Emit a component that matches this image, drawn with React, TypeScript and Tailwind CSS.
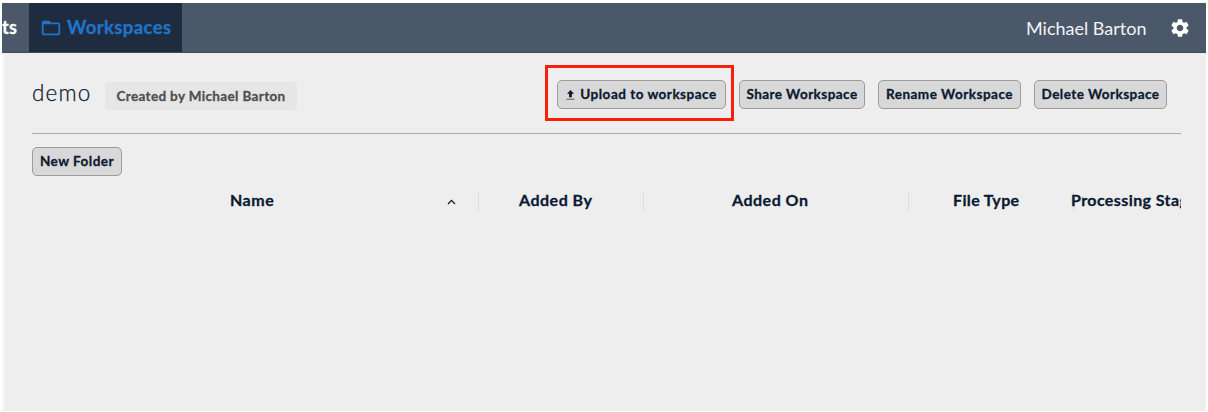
import type { ReactNode } from "react";
import { MdFolderOpen, MdSettings } from "react-icons/md";

function Button({ className, children }: { className: string; children: ReactNode }) {
  return (
    <button
      className={`flex h-[29px] shrink-0 items-center justify-center whitespace-nowrap rounded-[5px] border border-[#999b9d] bg-[#d8d8d8] pb-px text-[13.5px] font-bold [-webkit-text-stroke:0.3px] ${className}`}
    >
      {children}
    </button>
  );
}

function HeaderCell({ className, children }: { className: string; children: ReactNode }) {
  return (
    <div className={`flex h-[19px] shrink-0 items-center whitespace-nowrap pb-[3px] text-[16px] leading-4 font-bold [-webkit-text-stroke:0.3px] ${className}`}>
      {children}
    </div>
  );
}

export default function App() {
  return (
    <div className="h-[412px] w-[1208px] overflow-hidden bg-white pt-[3px] pr-[2px] pb-px pl-[2px] font-['Lato',sans-serif] text-[#0c1a33]">
      <header className="flex h-[50px] items-stretch border-b border-[#3e4d5d] bg-[#4a5869]">
        <div className="flex w-[27px] items-center overflow-hidden text-[18px] font-bold tracking-[0.3px] text-white [-webkit-text-stroke:0.3px]">
          <span>ts</span>
        </div>
        <div className="flex w-[153px] items-center bg-[#1f2c3f] pl-[11px] text-[#1f73ca]">
          <MdFolderOpen className="size-[22px]" />
          <span className="ml-[5px] pt-px text-[18.5px] font-bold tracking-[0.4px] [-webkit-text-stroke:0.3px]">Workspaces</span>
        </div>
        <div className="ml-auto flex items-center text-white">
          <span className="w-[121px] whitespace-nowrap pt-px text-[18px] text-[#f1f3f5]">Michael Barton</span>
          <MdSettings className="mr-[15px] ml-[22px] size-[22px]" />
        </div>
      </header>

      <main className="h-[358px] border-l-2 border-[#f8f8f8] bg-[#eeeeee] pr-[25px] pl-7">
        <div className="flex h-[81px] items-start border-b border-[#aaaaaa] pt-3">
          <h1 className="mt-[11px] w-[73px] text-[22.5px] leading-[34px] font-light tracking-[1.2px] [-webkit-text-stroke:0.25px]">demo</h1>
          <div className="mt-[17px] flex h-7 w-[192px] items-center justify-center whitespace-nowrap rounded bg-[#e6e6e6] text-[13.5px] font-bold tracking-[0.35px] text-[#505050] [-webkit-text-stroke:0.3px]">
            Created by Michael Barton
          </div>
          <div className="ml-auto flex items-start">
            <div className="mr-[5px] h-[56px] w-[189px] border-[3px] border-[#f81f0b] pt-3 pl-[9px]">
              <Button className="w-[169px] tracking-[0.5px]">
                <svg viewBox="0 0 9 10" className="mt-0.5 mr-[5px] h-[10px] w-[9px]" fill="none">
                  <path d="M4.5 0L8 3.7H5.9V7.2H3.1V3.7H1Z" fill="#0c1a33" />
                  <path d="M.5 9.2H8.5" stroke="#4d5964" />
                </svg>
                <span>Upload to workspace</span>
              </Button>
            </div>
            <div className="flex gap-[13px] pt-[15px] pr-[14px]">
              <Button className="w-[126px] tracking-[0.45px]">Share Workspace</Button>
              <Button className="w-[143px] tracking-[0.5px]">Rename Workspace</Button>
              <Button className="w-[133px] tracking-[0.45px]">Delete Workspace</Button>
            </div>
          </div>
        </div>

        <div className="pt-[13px]">
          <Button className="w-[90px] pb-0.5 tracking-[0.5px]">New Folder</Button>
        </div>

        <div className="mt-4 flex overflow-hidden">
          <HeaderCell className="w-[447px] border-r border-[#dddddd] pl-[198px] tracking-[0.5px]">
            <span>Name</span>
            <svg viewBox="0 0 9 6" className="mt-1 mr-[22px] ml-auto h-[6px] w-[9px]" fill="none">
              <path d="M1 5L4.5 1.4L8 5" stroke="#0c1a33" strokeWidth="1.3" />
            </svg>
          </HeaderCell>
          <HeaderCell className="w-[165px] border-r border-[#dddddd] pl-10 tracking-[0.5px]">Added By</HeaderCell>
          <HeaderCell className="w-[265px] border-r border-[#dddddd] pl-[88px] tracking-[0.5px]">Added On</HeaderCell>
          <HeaderCell className="w-[165px] border-r border-[#dddddd] pl-[44px] tracking-[0.35px]">File Type</HeaderCell>
          <HeaderCell className="w-[165px] tracking-[0.4px]"><span className="-ml-[3px]">Processing Stage</span></HeaderCell>
        </div>
      </main>
    </div>
  );
}
